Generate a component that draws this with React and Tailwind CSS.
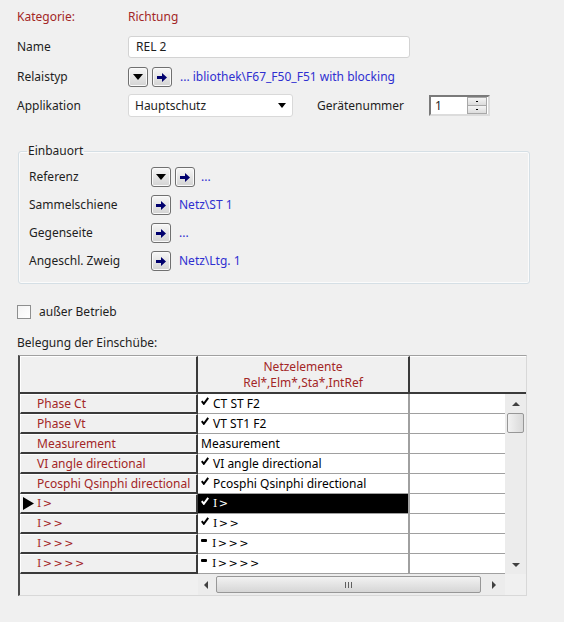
import React from 'react';

const red = 'text-[#a32626]';
const blue = 'text-[#2f2fd0]';

const DropBtn = () => (
  <div className="w-[20px] h-[20px] rounded-[3px] border border-[#707070] bg-gradient-to-b from-[#f7f7f7] to-[#d3d3d3] shadow-[inset_0_0_0_1px_#fafafa] flex items-center justify-center">
    <svg width="10" height="6" viewBox="0 0 10 6">
      <polygon points="0,0 10,0 5,6" fill="#000" />
    </svg>
  </div>
);

const ArrowBtn = () => (
  <div className="w-[20px] h-[20px] rounded-[3px] border border-[#707070] bg-gradient-to-b from-[#f7f7f7] to-[#d3d3d3] shadow-[inset_0_0_0_1px_#fafafa] flex items-center justify-center">
    <svg width="10" height="9" viewBox="0 0 10 9">
      <path d="M0 3h5V0l5 4.5L5 9V6H0z" fill="#00006e" />
    </svg>
  </div>
);

const Check = () => (
  <svg width="8" height="8" viewBox="0 0 8 8" className="mb-[5px] mr-[4px] shrink-0">
    <path d="M0.8 4.2 L2.8 6.8 L7.2 0.8" stroke="currentColor" strokeWidth="2" fill="none" />
  </svg>
);

const Dash = () => (
  <span className="inline-block w-[6px] h-[3px] rounded-[1px] bg-black mb-[6px] mr-[5px] shrink-0" />
);

const rows = [
  { head: 'Phase Ct', value: 'CT ST F2', mark: 'check' },
  { head: 'Phase Vt', value: 'VT ST1 F2', mark: 'check' },
  { head: 'Measurement', value: 'Measurement', mark: null },
  { head: 'VI angle directional', value: 'VI angle directional', mark: 'check' },
  { head: 'Pcosphi Qsinphi directional', value: 'Pcosphi Qsinphi directional', mark: 'check' },
  { head: 'I>', value: 'I>', mark: 'check', selected: true, mono: true },
  { head: 'I>>', value: 'I>>', mark: 'check', mono: true },
  { head: 'I>>>', value: 'I>>>', mark: 'dash', mono: true },
  { head: 'I>>>>', value: 'I>>>>', mark: 'dash', mono: true },
];

const Label = ({ children, w = 'w-[111px]' }) => (
  <span className={`${w} shrink-0`}>{children}</span>
);

const monoCls = "tracking-[1.5px] font-['DejaVu_Serif',serif] text-[11px]";

export default function App() {
  return (
    <div className="w-[564px] h-[622px] bg-[#f0f0f0] text-[12px] leading-[16px] text-[#1e1e1e] pl-[17px] pt-[7px] font-['Noto_Sans','DejaVu_Sans',sans-serif] overflow-hidden">
      <div className="flex items-center h-[20px]">
        <Label><span className={red}>Kategorie:</span></Label>
        <span className={red}>Richtung</span>
      </div>

      <div className="flex items-center h-[22px] mt-[9px]">
        <Label>Name</Label>
        <div className="w-[282px] h-[22px] bg-white border border-[#d3d3d3] rounded-[3px] pl-[7px] flex items-center">REL 2</div>
      </div>

      <div className="flex items-center h-[20px] mt-[9px]">
        <Label>Relaistyp</Label>
        <DropBtn />
        <div className="ml-[4px]"><ArrowBtn /></div>
        <span className={`ml-[8px] ${blue}`}>... ibliothek\F67_F50_F51 with blocking</span>
      </div>

      <div className="flex items-center h-[23px] mt-[7px]">
        <Label>Applikation</Label>
        <div className="w-[165px] h-[23px] bg-white border border-[#d9d9d9] rounded-[3px] pl-[6px] pr-[6px] flex items-center justify-between">
          <span>Hauptschutz</span>
          <svg width="8" height="5" viewBox="0 0 8 5"><polygon points="0,0 8,0 4,5" fill="#000" /></svg>
        </div>
        <span className="ml-[24px] w-[112px] shrink-0">Gerätenummer</span>
        <div className="w-[61px] h-[21px] border-2 border-t-[#7a7a7a] border-l-[#7a7a7a] border-r-[#dcdcdc] border-b-[#dcdcdc] bg-white flex">
          <span className="pl-[4px] flex-1 text-[#1e1e1e] leading-[17px]">1</span>
          <div className="w-[20px] flex flex-col mr-[1px]">
            <div className="flex-1 border border-[#a8a8a8] bg-gradient-to-b from-[#f4f4f4] to-[#dcdcdc] flex items-center justify-center">
              <span className="w-[2px] h-[1px] bg-black" />
            </div>
            <div className="flex-1 border border-[#a8a8a8] border-t-0 bg-gradient-to-b from-[#f4f4f4] to-[#dcdcdc] flex items-center justify-center">
              <span className="w-[2px] h-[1px] bg-black" />
            </div>
          </div>
        </div>
      </div>

      <fieldset className="mt-[26px] ml-[1px] w-[512px] border border-[#d5dfe5] rounded-[3px] shadow-[inset_0_0_0_1px_#fbfbfb] pl-[10px] pt-[8px] pb-[12px]">
        <legend className="-ml-[2px] px-[1px]">Einbauort</legend>
        <div className="flex flex-col gap-[8px]">
          <div className="flex items-center h-[20px]">
            <Label w="w-[122px]">Referenz</Label>
            <DropBtn />
            <div className="ml-[4px]"><ArrowBtn /></div>
            <span className={`ml-[6px] ${blue}`}>...</span>
          </div>
          <div className="flex items-center h-[20px]">
            <Label w="w-[122px]">Sammelschiene</Label>
            <ArrowBtn />
            <span className={`ml-[8px] ${blue}`}>Netz\ST 1</span>
          </div>
          <div className="flex items-center h-[20px]">
            <Label w="w-[122px]">Gegenseite</Label>
            <ArrowBtn />
            <span className={`ml-[8px] ${blue}`}>...</span>
          </div>
          <div className="flex items-center h-[20px]">
            <Label w="w-[122px]">Angeschl. Zweig</Label>
            <ArrowBtn />
            <span className={`ml-[8px] ${blue}`}>Netz\Ltg. 1</span>
          </div>
        </div>
      </fieldset>

      <div className="flex items-center h-[15px] mt-[20px]">
        <div className="w-[14px] h-[14px] border border-[#8e8f8f] bg-gradient-to-br from-[#f4f4f4] to-white" />
        <span className="ml-[8px]">außer Betrieb</span>
      </div>

      <div className="mt-[16px] h-[16px]">Belegung der Einschübe:</div>

      <div className="mt-[4px] ml-[1px] w-[509px] border-l-2 border-l-[#4a4a4a] border-t border-t-[#a0a0a0] border-r border-r-[#d8d8d8] border-b border-b-[#d8d8d8] bg-[#f0f0f0]">
        <div className="flex h-[38px] border-b-2 border-b-[#3a3a3a]">
          <div className="w-[178px] border-t border-l border-white border-r-2 border-r-[#3a3a3a]" />
          <div className={`w-[212px] border-t border-white border-r-2 border-r-[#3a3a3a] flex flex-col items-center justify-center leading-[16px] ${red}`}>
            <span>Netzelemente</span>
            <span>Rel*,Elm*,Sta*,IntRef</span>
          </div>
          <div className="flex-1 border-t border-white" />
        </div>

        <div className="flex">
          <div className="flex-1 flex flex-col">
            {rows.map((r) => (
              <div key={r.head} className="flex h-[20px]">
                <div className={`w-[178px] flex items-center pl-[2px] border-t border-l border-white border-b-2 border-b-[#3a3a3a] border-r-2 border-r-[#3a3a3a] ${red}`}>
                  <span className="w-[14px] shrink-0 flex items-center">
                    {r.selected && (
                      <svg width="11" height="13" viewBox="0 0 11 13"><polygon points="0,0 11,6.5 0,13" fill="#000" /></svg>
                    )}
                  </span>
                  <span className={r.mono ? monoCls : ''}>{r.head}</span>
                </div>
                <div className={`w-[212px] flex items-center pl-[3px] border-b border-b-[#a0a0a0] border-r-2 border-r-[#a0a0a0] ${r.selected ? 'bg-black text-white' : 'bg-white text-black'}`}>
                  {r.mark === 'check' && <Check />}
                  {r.mark === 'dash' && <Dash />}
                  <span className={r.mono ? monoCls : ''}>{r.value}</span>
                </div>
                <div className="flex-1 bg-white border-b border-b-[#a0a0a0]" />
              </div>
            ))}
          </div>
          <div className="w-[21px] bg-[#ececec] flex flex-col items-center pt-[8px] pb-[7px]">
            <svg width="8" height="4" viewBox="0 0 8 4"><polygon points="4,0 8,4 0,4" fill="#404040" /></svg>
            <div className="mt-[7px] w-[17px] h-[20px] rounded-[2px] border border-[#979797] bg-gradient-to-r from-[#f2f2f2] to-[#d9d9d9]" />
            <div className="flex-1" />
            <svg width="8" height="4" viewBox="0 0 8 4"><polygon points="0,0 8,0 4,4" fill="#404040" /></svg>
          </div>
        </div>

        <div className="flex h-[21px]">
          <div className="w-[178px]" />
          <div className="flex-1 bg-[#ececec] flex items-center pl-[6px] pr-[9px]">
            <svg width="4" height="8" viewBox="0 0 4 8"><polygon points="4,0 4,8 0,4" fill="#404040" /></svg>
            <div className="ml-[8px] h-[17px] flex-1 rounded-[2px] border border-[#979797] bg-gradient-to-b from-[#f2f2f2] to-[#d6d6d6] flex items-center justify-center">
              <div className="flex gap-[2px]">
                <span className="w-[1px] h-[6px] bg-[#606060]" />
                <span className="w-[1px] h-[6px] bg-[#606060]" />
                <span className="w-[1px] h-[6px] bg-[#606060]" />
              </div>
            </div>
            <div className="ml-[11px]">
              <svg width="4" height="8" viewBox="0 0 4 8"><polygon points="0,0 4,4 0,8" fill="#404040" /></svg>
            </div>
          </div>
          <div className="w-[21px]" />
        </div>
      </div>
    </div>
  );
}
